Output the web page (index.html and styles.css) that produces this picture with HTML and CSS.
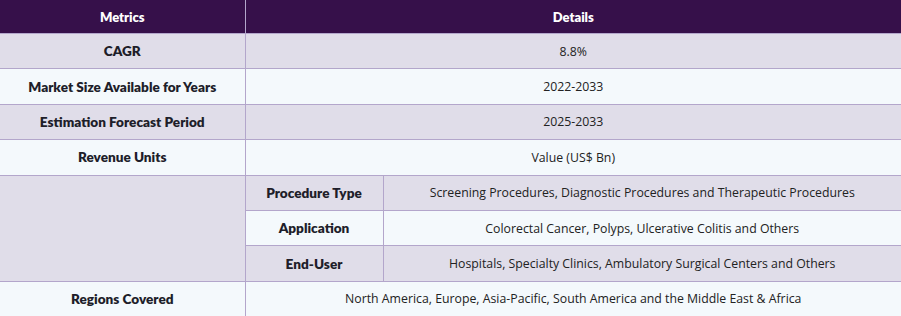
FILE: index.html
```html
<!DOCTYPE html>
<html>
<head>
<meta charset="utf-8">
<link rel="stylesheet" href="styles.css">
</head>
<body>
<table class="metrics">
  <colgroup>
    <col class="c1"><col class="c2"><col class="c3">
  </colgroup>
  <thead>
    <tr><th>Metrics</th><th colspan="2">Details</th></tr>
  </thead>
  <tbody>
    <tr class="odd"><td class="label">CAGR</td><td colspan="2">8.8%</td></tr>
    <tr class="even"><td class="label">Market Size Available for Years</td><td colspan="2">2022-2033</td></tr>
    <tr class="odd"><td class="label">Estimation Forecast Period</td><td colspan="2">2025-2033</td></tr>
    <tr class="even"><td class="label">Revenue Units</td><td colspan="2">Value (US$ Bn)</td></tr>
    <tr class="odd"><td class="label" rowspan="3"></td><td class="label">Procedure Type</td><td>Screening Procedures, Diagnostic Procedures and Therapeutic Procedures</td></tr>
    <tr class="even"><td class="label">Application</td><td>Colorectal Cancer, Polyps, Ulcerative Colitis and Others</td></tr>
    <tr class="odd"><td class="label">End-User</td><td>Hospitals, Specialty Clinics, Ambulatory Surgical Centers and Others</td></tr>
    <tr class="even"><td class="label">Regions Covered</td><td colspan="2">North America, Europe, Asia-Pacific, South America and the Middle East &amp; Africa</td></tr>
  </tbody>
</table>
</body>
</html>
```
FILE: styles.css
```css
html, body {
  margin: 0;
  padding: 0;
  background: #ffffff;
}
.metrics {
  width: 901px;
  border-collapse: collapse;
  table-layout: fixed;
  font-family: "Open Sans", "Noto Sans", sans-serif;
  font-size: 12.3px;
  color: #222222;
}
.c1 { width: 245px; }
.c2 { width: 138px; }
.metrics th {
  background: #36104a;
  color: #ffffff;
  font-family: Lato, sans-serif;
  font-weight: 800;
  font-size: 13px;
  height: 33px;
  padding: 0;
  text-align: center;
  border-right: 1px solid #b3a6cb;
}
.metrics th:last-child { border-right: none; }
.metrics td {
  height: 34.4px;
  padding: 0;
  text-align: center;
  border: 1px solid #b3a6cb;
}
.metrics tr td:first-child { border-left: none; }
.metrics tr td:last-child { border-right: none; }
.metrics tr:last-child td { border-bottom: none; }
.metrics td.label {
  font-family: Lato, sans-serif;
  font-weight: 800;
  font-size: 13.6px;
  color: #1e1e2a;
}
.odd td { background: #e0dde9; }
.even td { background: #f4f9fc; }
```
